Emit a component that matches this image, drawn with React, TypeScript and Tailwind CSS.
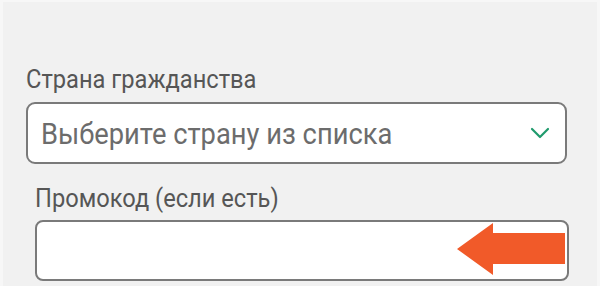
import React from 'react';

const ArrowLeft: React.FC = () => (
  <svg width="108" height="52" viewBox="0 0 108 52" className="absolute right-[2px] top-[1px]">
    <polygon points="0,26 36,0 36,10 108,10 108,41 36,41 36,52" fill="#f15a29" />
  </svg>
);

const Chevron: React.FC = () => (
  <svg width="20" height="12" viewBox="0 0 20 12" fill="none">
    <path d="M2 2 L10 10 L18 2" stroke="#1f9a6c" strokeWidth="2.2" strokeLinecap="round" strokeLinejoin="round" />
  </svg>
);

export default function App() {
  return (
    <div
      className="w-[600px] h-[286px] overflow-hidden bg-[#f1f1f1] border-x-[3px] border-t-2 border-[#f7f7f7] text-[#565656]"
      style={{ fontFamily: 'Roboto, "Noto Sans", sans-serif' }}
    >
      <div className="flex flex-col pt-[64px]">
        {/* Country select */}
        <div className="pl-[23px] pr-[30px]">
          <label className="block text-[26px] leading-none text-[#565656]">
            <span className="inline-block origin-left scale-x-[0.91] whitespace-nowrap">Страна гражданства</span>
          </label>
          <div className="mt-[10px] h-[62px] flex items-center justify-between bg-white border-2 border-[#7a7a7a] rounded-[9px] pl-[13px] pr-[15px]">
            <span className="inline-block origin-left scale-x-[0.91] whitespace-nowrap text-[30px] text-[#6c6c6c] leading-none translate-y-[1px]">
              Выберите страну из списка
            </span>
            <Chevron />
          </div>
        </div>

        {/* Promo code */}
        <div className="pl-[32px] pr-[28px] mt-[21px]">
          <label className="block text-[26px] leading-none text-[#565656]">
            <span className="inline-block origin-left scale-x-[0.91] whitespace-nowrap">Промокод (если есть)</span>
          </label>
          <div className="relative mt-[9px] h-[61px] bg-white border-2 border-[#7a7a7a] rounded-[8px]">
            <ArrowLeft />
          </div>
        </div>
      </div>
    </div>
  );
}
